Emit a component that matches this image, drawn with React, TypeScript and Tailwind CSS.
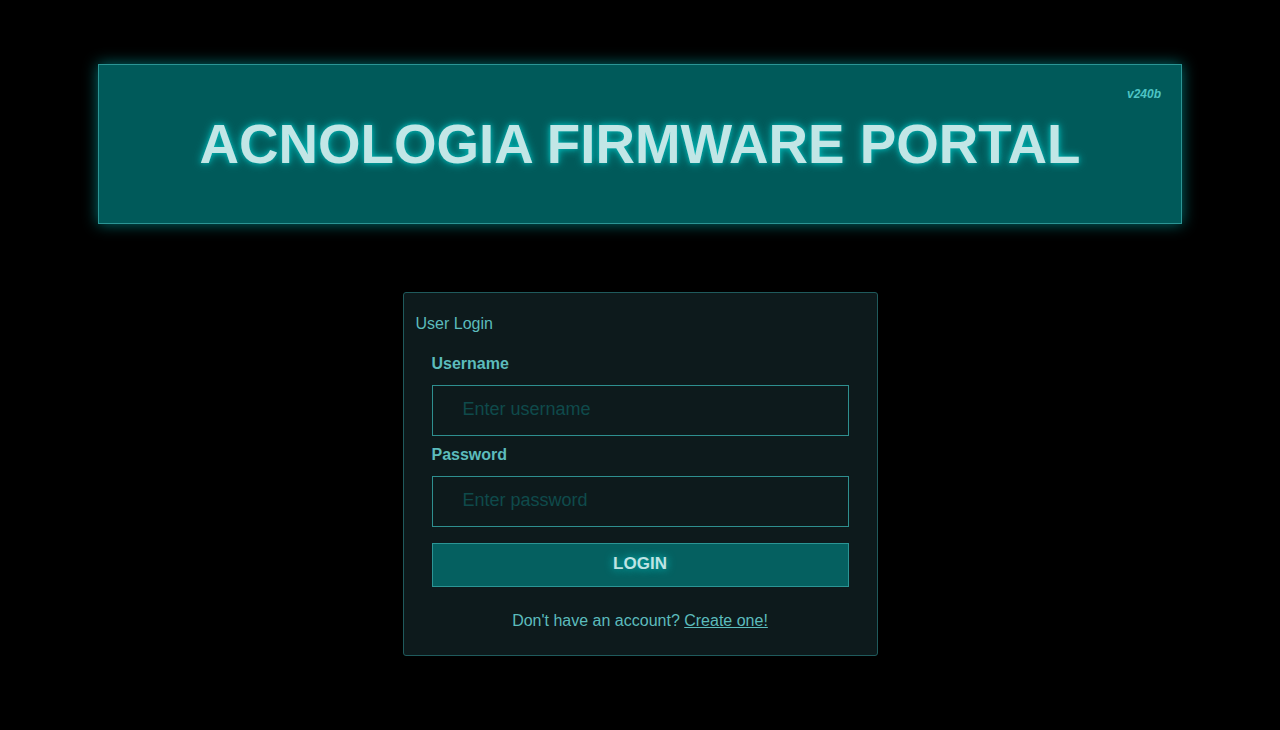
import React from "react";

export default function App() {
  return (
    <div
      className="min-h-[730px] w-full bg-black pt-16 pb-10"
      style={{ fontFamily: '"Liberation Sans", Arial, sans-serif' }}
    >
      <header className="relative mx-[98px] h-[160px] border border-[#2b9595] bg-[#005a5a] shadow-[0_0_14px_rgba(0,200,200,0.55)] flex items-center justify-center">
        <span className="absolute right-[20px] top-[22px] text-[12px] leading-[14px] font-bold italic text-[#4ec4c4]">
          v240b
        </span>
        <h1 className="text-[54.7px] leading-[64px] font-bold text-[#c2e6e6] [text-shadow:0_0_10px_#00b8b8,0_0_4px_#00a0a0]">
          ACNOLOGIA FIRMWARE PORTAL
        </h1>
      </header>

      <div className="mx-auto mt-[68px] w-[475px] rounded-[3px] border border-[#1f5a5c] bg-[#0d1a1c] px-[12px] pt-[22px] pb-[25px]">
        <div className="text-[16px] leading-[18px] text-[#5cbcbc]">User Login</div>
        <div className="px-[16px] flex flex-col">
          <label className="mt-[22px] text-[16px] leading-[18px] font-bold text-[#5cbcbc]">
            Username
          </label>
          <input
            type="text"
            placeholder="Enter username"
            className="mt-[12px] h-[51px] w-full border border-[#2e8f8f] bg-[#0d1a1c] pl-[30px] pb-[2px] text-[18px] text-[#5cbcbc] outline-none placeholder:text-[#0f4a4b]"
            style={{ fontFamily: '"Liberation Sans", Arial, sans-serif' }}
          />
          <label className="mt-[10px] text-[16px] leading-[18px] font-bold text-[#5cbcbc]">
            Password
          </label>
          <input
            type="password"
            placeholder="Enter password"
            className="mt-[12px] h-[51px] w-full border border-[#2e8f8f] bg-[#0d1a1c] pl-[30px] pb-[2px] text-[18px] text-[#5cbcbc] outline-none placeholder:text-[#0f4a4b]"
            style={{ fontFamily: '"Liberation Sans", Arial, sans-serif' }}
          />
          <button
            className="mt-[16px] h-[44px] w-full border border-[#2b9595] bg-[#056060] pb-[2px] text-[17px] font-bold text-[#bfe3e3] [text-shadow:0_0_8px_#00c8c8]"
            style={{ fontFamily: '"Liberation Sans", Arial, sans-serif' }}
          >
            LOGIN
          </button>
          <p className="mt-[25px] text-center text-[16px] leading-[18px] text-[#5cbcbc]">
            Don't have an account?{" "}
            <a href="#" className="underline text-[#5cbcbc]">
              Create one!
            </a>
          </p>
        </div>
      </div>
    </div>
  );
}
